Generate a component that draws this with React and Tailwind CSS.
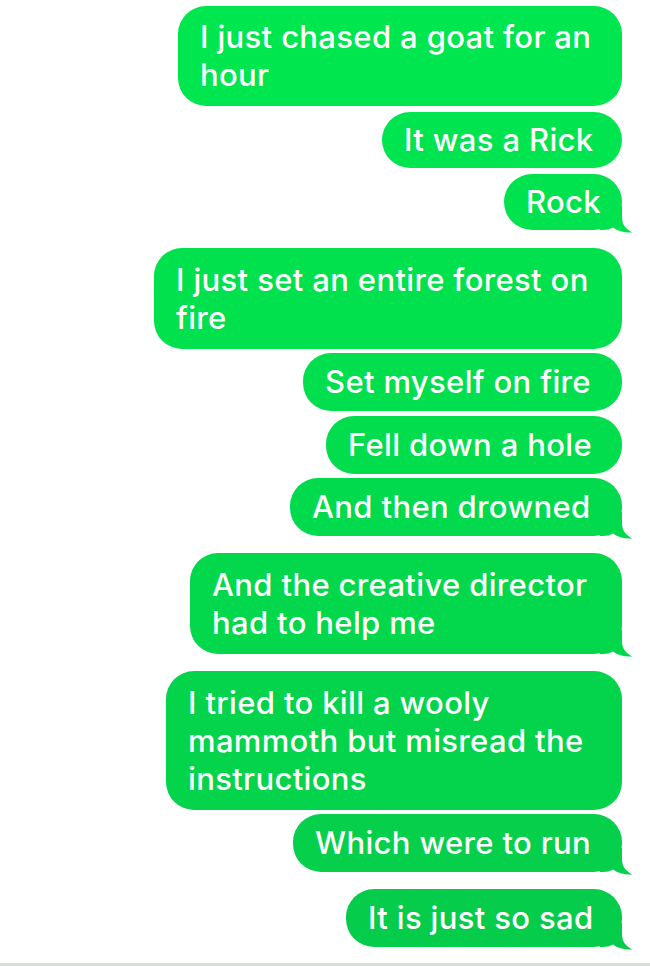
import React from "react";

function Tail({ color }) {
  return (
    <svg
      className="absolute right-[-12px] bottom-[-3px]"
      width="34"
      height="27"
      viewBox="0 0 34 27"
    >
      <path
        d="M22 0 L22 11 C22 18.5 26 23.5 32.5 26.5 C25 27 18 25.5 13 21.5 C10 23.2 7 24 3 24 L0 24 L0 0 Z"
        fill={color}
      />
    </svg>
  );
}

const msgs = [
  { lines: ["I just chased a goat for an", "hour"], w: "w-[444px]", h: "h-[100px]", c: "#00e64f", mt: "mt-[6px]", bg: "bg-[#00e64f]" },
  { lines: ["It was a Rick"], w: "w-[240px]", h: "h-[56px]", c: "#00e54f", mt: "mt-[6px]", bg: "bg-[#00e54f]" },
  { lines: ["Rock"], w: "w-[118px]", h: "h-[56px]", c: "#00e34f", mt: "mt-[6px]", bg: "bg-[#00e34f]", tail: true, pr: true },
  { lines: ["I just set an entire forest on", "fire"], w: "w-[468px]", h: "h-[101px]", c: "#01e14e", mt: "mt-[18px]", bg: "bg-[#01e14e]" },
  { lines: ["Set myself on fire"], w: "w-[319px]", h: "h-[58px]", c: "#01df4e", mt: "mt-[4px]", bg: "bg-[#01df4e]" },
  { lines: ["Fell down a hole"], w: "w-[296px]", h: "h-[58px]", c: "#02dd4d", mt: "mt-[5px]", bg: "bg-[#02dd4d]" },
  { lines: ["And then drowned"], w: "w-[332px]", h: "h-[58px]", c: "#02da4d", mt: "mt-[4px]", bg: "bg-[#02da4d]", tail: true },
  { lines: ["And the creative director", "had to help me"], w: "w-[432px]", h: "h-[101px]", c: "#03d74c", mt: "mt-[17px]", bg: "bg-[#03d74c]", tail: true },
  { lines: ["I tried to kill a wooly", "mammoth but misread the", "instructions"], w: "w-[456px]", h: "h-[139px]", c: "#04d34c", mt: "mt-[17px]", bg: "bg-[#04d34c]" },
  { lines: ["Which were to run"], w: "w-[329px]", h: "h-[58px]", c: "#05cf4b", mt: "mt-[4px]", bg: "bg-[#05cf4b]", tail: true },
  { lines: ["It is just so sad"], w: "w-[276px]", h: "h-[58px]", c: "#06cc4b", mt: "mt-[17px]", bg: "bg-[#06cc4b]", tail: true },
];

export default function App() {
  return (
    <div className="w-[650px] h-[966px] bg-white overflow-hidden flex flex-col font-['Inter','Liberation_Sans',sans-serif]">
      <div className="flex-1 flex flex-col items-end pr-[28px]">
        {msgs.map((m, i) => (
          <div
            key={i}
            className={`relative ${m.w} ${m.h} ${m.mt} ${m.bg} rounded-[28px] pl-[22px] flex flex-col justify-center text-white text-[31px] font-medium leading-[38px] tracking-[0.35px] whitespace-nowrap`}
          >
            {m.lines.map((l, j) => (
              <span key={j} className="relative z-10">{l}</span>
            ))}
            {m.tail && <Tail color={m.c} />}
          </div>
        ))}
      </div>
      <div className="h-[3px] bg-[#d6dcd8]" />
    </div>
  );
}
